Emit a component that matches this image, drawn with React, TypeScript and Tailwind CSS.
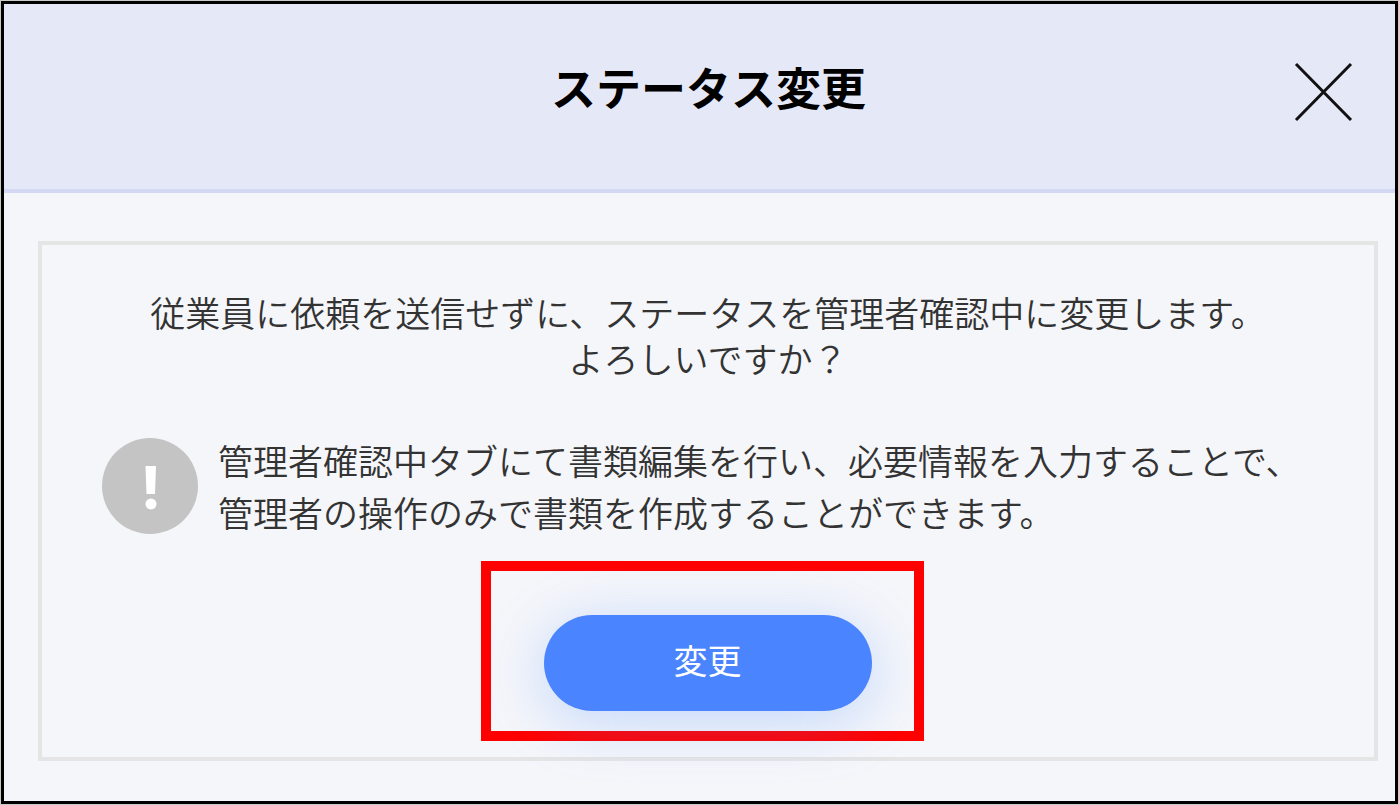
import React from "react";

const CloseIcon: React.FC = () => (
  <svg className="h-15 w-15" viewBox="0 0 60 60" fill="none" stroke="#111111" strokeWidth="3">
    <path d="M3 2 58 58M58 2 3 58" />
  </svg>
);

const NoticeIcon: React.FC = () => (
  <svg className="h-24 w-24 shrink-0" viewBox="0 0 96 96">
    <circle cx="48" cy="48" r="48" fill="#c4c4c4" />
    <path d="M43.5 28h10.5l-1 28h-8.5z" fill="#ffffff" />
    <circle cx="49" cy="66" r="5.5" fill="#ffffff" />
  </svg>
);

const App: React.FC = () => {
  return (
    <div className="flex min-h-screen flex-col bg-[#c8ccc8] p-px font-['Noto_Sans_CJK_JP',sans-serif]">
      <div
        role="dialog"
        aria-labelledby="dialog-title"
        className="flex flex-1 flex-col border-3 border-black bg-[#f5f6fa] text-[#333333]"
      >
        {/* Header */}
        <header className="grid grid-cols-[1fr_auto_1fr] items-center border-b-4 border-[#d5d8f2] bg-[#e5e8f7] pt-[55px] pr-[42px] pb-16 pl-15">
          <h1 id="dialog-title" className="col-start-2 pb-2.5 text-[45px] leading-14 font-bold text-black">
            ステータス変更
          </h1>
          <button type="button" aria-label="閉じる" className="justify-self-end">
            <CloseIcon />
          </button>
        </header>

        {/* Body */}
        <main className="mt-12 mr-[17px] mb-10 ml-[34px] flex flex-1 flex-col items-center border-4 border-[#e5e5e5] px-15 pt-11 pb-4">
          <p className="text-center text-[35px] leading-[46px] font-[350]">
            従業員に依頼を送信せずに、ステータスを管理者確認中に変更します。
            <br />
            よろしいですか？
          </p>
          <div className="mt-[53px] flex w-full items-center gap-5">
            <NoticeIcon />
            <p className="text-[35px] leading-[52px] font-[350]">
              管理者確認中タブにて書類編集を行い、必要情報を入力することで、
              <br />
              管理者の操作のみで書類を作成することができます。
            </p>
          </div>

          {/* Highlighted action */}
          <div className="mt-[23px] mr-3 border-10 border-[#ff0000] pt-11 pr-[42px] pb-5 pl-[53px]">
            <button
              type="button"
              className="h-24 w-82 rounded-full bg-[#4a84ff] pb-2 text-[34px] text-white shadow-[0_10px_60px_rgba(74,144,255,0.3)]"
            >
              変更
            </button>
          </div>
        </main>
      </div>
    </div>
  );
};

export default App;
